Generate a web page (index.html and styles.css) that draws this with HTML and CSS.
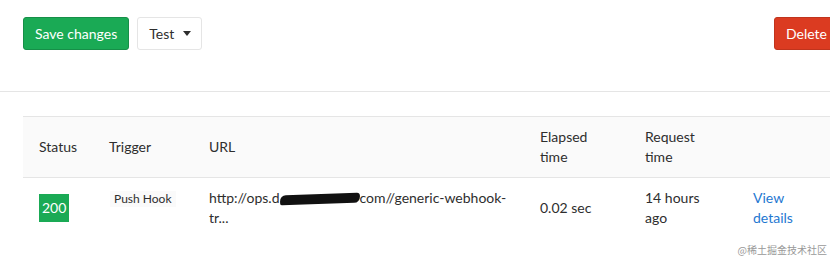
FILE: index.html
```html
<!DOCTYPE html>
<html lang="en">
<head>
  <meta charset="UTF-8" />
  <title>Webhook settings</title>
  <link rel="stylesheet" href="styles.css">
</head>
<body>
  <div class="pagina">

    <!-- barra de ações -->
    <div class="acoes">
      <button class="btn btn-verde">Save changes</button>
      <button class="btn btn-branco">Test <span class="seta"></span></button>
      <button class="btn btn-vermelho">Delete</button>
    </div>

    <hr class="linha">

    <!-- eventos recentes -->
    <table class="eventos">
      <colgroup>
        <col style="width: 70px">
        <col style="width: 100px">
        <col style="width: 331px">
        <col style="width: 105px">
        <col style="width: 108px">
        <col>
      </colgroup>
      <thead>
        <tr>
          <th>Status</th>
          <th>Trigger</th>
          <th>URL</th>
          <th>Elapsed<br>time</th>
          <th>Request<br>time</th>
          <th></th>
        </tr>
      </thead>
      <tbody>
        <tr>
          <td><span class="status">200</span></td>
          <td class="topo"><span class="rotulo">Push Hook</span></td>
          <td class="topo url">http://ops.d<span class="rabisco"></span>com//generic-webhook-<br>tr...</td>
          <td>0.02 sec</td>
          <td class="topo">14 hours<br>ago</td>
          <td class="topo"><a href="#" class="link">View<br>details</a></td>
        </tr>
      </tbody>
    </table>
  </div>

  <div class="marca">@稀土掘金技术社区</div>
</body>
</html>
```

FILE: styles.css
```css
html, body {
  margin: 0;
  padding: 0;
  overflow: hidden;
}

body {
  background: white;
  color: #2e2e2e;
  font-family: Lato, 'Open Sans', sans-serif;
  font-size: 14px;
  position: relative;
  height: 259px;
}

.pagina {
  width: 817px;
  padding: 17px 0 0 23px;
}

.acoes {
  display: flex;
  gap: 8px;
  width: 816px;
}

.btn {
  font-family: inherit;
  font-size: 14px;
  height: 33px;
  padding: 0 10px;
  border-radius: 3px;
  border: 1px solid transparent;
  cursor: pointer;
  display: flex;
  align-items: center;
  gap: 9px;
}

.btn-verde {
  background-color: #1aaa55;
  border-color: #168f48;
  color: white;
  padding: 0 11px;
}

.btn-branco {
  background-color: white;
  border-color: #e5e5e5;
  color: #2e2e2e;
  padding: 0 10px 0 11px;
}

.btn-vermelho {
  background-color: #db3b21;
  border-color: #c0341d;
  color: white;
  margin-left: auto;
  padding: 0 11px;
}

.seta {
  width: 0;
  height: 0;
  border-left: 4px solid transparent;
  border-right: 4px solid transparent;
  border-top: 5px solid #2e2e2e;
}

.linha {
  border: none;
  border-top: 1px solid #e5e5e5;
  margin: 41px 0 0 -23px;
  width: 860px;
}

.eventos {
  margin-top: 24px;
  width: 830px;
  border-collapse: collapse;
  table-layout: fixed;
}

.eventos th {
  background-color: #fafafa;
  border-top: 1px solid #e5e5e5;
  border-bottom: 1px solid #e5e5e5;
  font-weight: normal;
  text-align: left;
  line-height: 20px;
  padding: 10px 16px;
  vertical-align: middle;
}

.eventos td {
  line-height: 20px;
  padding: 10px 16px;
  vertical-align: middle;
}

.eventos td.topo {
  vertical-align: top;
}

.eventos td.url {
  white-space: nowrap;
}

.status {
  display: inline-block;
  background-color: #1aaa55;
  color: white;
  padding: 4px 3px;
  line-height: 20px;
}

.rotulo {
  display: inline-block;
  background-color: #fafafa;
  font-size: 12px;
  line-height: 16px;
  padding: 0 4px;
  margin-top: 2px;
  margin-left: 1px;
}

.rabisco {
  display: inline-block;
  width: 80px;
  height: 10px;
  background: #111;
  border-radius: 6px 3px 6px 2px;
  vertical-align: middle;
  transform: rotate(-2deg);
}

.link {
  color: #1f78d1;
  text-decoration: none;
}

.marca {
  position: absolute;
  right: 3px;
  bottom: 2px;
  font-family: 'Noto Sans CJK SC', sans-serif;
  font-size: 10px;
  color: #999;
}
```
